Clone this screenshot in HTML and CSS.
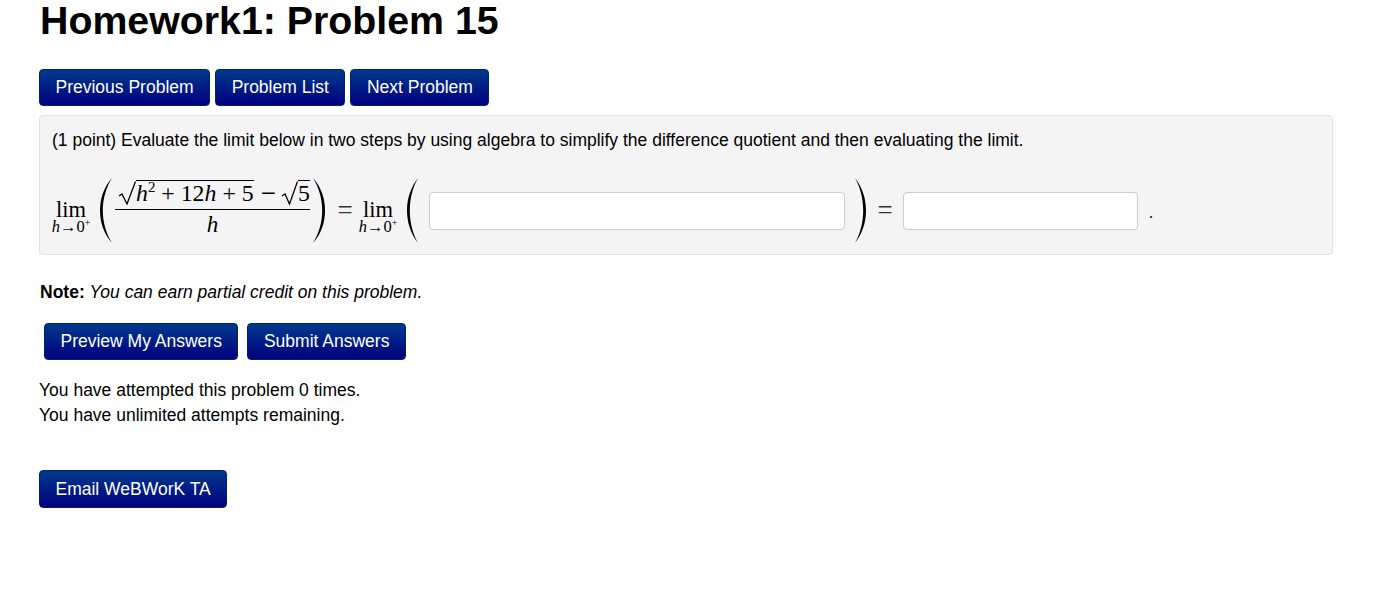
FILE: index.html
```html
<!DOCTYPE html>
<html lang="en">
<head>
  <meta charset="UTF-8" />
  <title>Homework1: Problem 15</title>
  <link rel="stylesheet" href="styles.css">
</head>
<body>
<div class="page">
  <h1 class="page-title">Homework1: Problem 15</h1>

  <div class="nav-buttons">
    <a class="btn">Previous Problem</a>
    <a class="btn">Problem List</a>
    <a class="btn">Next Problem</a>
  </div>

  <div class="problem-box">
    <p class="problem-text">(1 point) Evaluate the limit below in two steps by using algebra to simplify the difference quotient and then evaluating the limit.</p>

    <div class="math-row">
      <span class="lim">
        <span class="lim-word">lim</span>
        <span class="lim-sub"><i>h</i>→0<sup>+</sup></span>
      </span>

      <svg class="paren paren-first" width="12" height="65" viewBox="0 0 12 65"><path d="M12 0 C4 9 0 20 0 32.500 C0 45 4 56 12 65 C6.500 56 2.800 45 2.800 32.500 C2.800 20 6.500 9 12 0 Z"/></svg>

      <span class="frac">
        <span class="frac-top">
          <svg class="radical" width="18" height="25" viewBox="0 0 18 25"><path d="M1 15 L4 13 L9 23 L17.500 0.500" /></svg>
          <span class="radicand"><i>h</i><sup>2</sup> + 12<i>h</i> + 5</span>
          <span class="minus">−</span>
          <svg class="radical" width="17" height="25" viewBox="0 0 17 25"><path d="M1 15 L4 13 L8.500 23 L16.500 0.500" /></svg>
          <span class="radicand">5</span>
        </span>
        <span class="frac-bottom"><i>h</i></span>
      </span>

      <svg class="paren paren-second" width="12" height="65" viewBox="0 0 12 65"><path d="M0 0 C8 9 12 20 12 32.500 C12 45 8 56 0 65 C5.500 56 9.200 45 9.200 32.500 C9.200 20 5.500 9 0 0 Z"/></svg>

      <span class="equals eq-first">=</span>

      <span class="lim lim-second">
        <span class="lim-word">lim</span>
        <span class="lim-sub"><i>h</i>→0<sup>+</sup></span>
      </span>

      <svg class="paren paren-open" width="11" height="65" viewBox="0 0 11 65"><path d="M11 0 C4 9 0 20 0 32.500 C0 45 4 56 11 65 C6 56 2.800 45 2.800 32.500 C2.800 20 6 9 11 0 Z"/></svg>

      <input class="answer answer-long" type="text" />

      <svg class="paren paren-close" width="11" height="65" viewBox="0 0 11 65"><path d="M0 0 C7 9 11 20 11 32.500 C11 45 7 56 0 65 C5 56 8.200 45 8.200 32.500 C8.200 20 5 9 0 0 Z"/></svg>

      <span class="equals eq-second">=</span>

      <input class="answer answer-short" type="text" />

      <span class="period">.</span>
    </div>
  </div>

  <p class="note"><b>Note:</b> <i>You can earn partial credit on this problem.</i></p>

  <div class="submit-buttons">
    <a class="btn">Preview My Answers</a>
    <a class="btn">Submit Answers</a>
  </div>

  <p class="attempts">You have attempted this problem 0 times.<br>You have unlimited attempts remaining.</p>

  <a class="btn btn-email">Email WeBWorK TA</a>
</div>
</body>
</html>
```

FILE: styles.css
```css
* { box-sizing: border-box; margin: 0; padding: 0; }
body {
  font-family: 'Liberation Sans', Arial, sans-serif;
  background: #fff;
  color: #000;
  font-size: 17.5px;
  line-height: 25px;
}
.page {
  width: 1294px;
  margin-left: 39px;
}
.page-title {
  font-size: 39.3px;
  line-height: 40px;
  font-weight: bold;
  height: 69px;
  margin-left: 1px;
}

.nav-buttons {
  display: flex;
  gap: 5px;
  margin-bottom: 9px;
}
.btn {
  display: inline-block;
  height: 37px;
  padding: 0 15.5px;
  font-size: 17.5px;
  line-height: 35px;
  color: #fff;
  white-space: nowrap;
  background: linear-gradient(to bottom, #003a8c, #00007f);
  border: 1px solid #002266;
  border-radius: 4px;
  cursor: pointer;
}

.problem-box {
  height: 140px;
  padding: 12px;
  background: #f4f4f4;
  border: 1px solid #e3e3e3;
  border-radius: 4px;
}

.math-row {
  display: flex;
  align-items: center;
  height: 65px;
  margin-top: 25px;
  font-family: 'Liberation Serif', 'Times New Roman', serif;
  font-size: 23px;
  line-height: 1;
}
.lim {
  display: flex;
  flex-direction: column;
  align-items: center;
  flex: none;
  width: 38px;
  padding-top: 12px;
}
.lim-word {
  font-size: 22.5px;
  line-height: 20px;
}
.lim-sub {
  font-size: 16.5px;
  line-height: 13px;
  white-space: nowrap;
}
.lim-sub sup {
  font-size: 10px;
  line-height: 0;
}
.paren {
  flex: none;
  fill: #000;
}
.paren-first {
  margin-left: 10px;
}
.paren-second {
  margin-left: 3px;
}
.paren-open {
  margin-left: 10px;
}
.paren-close {
  margin-left: 10px;
}

.frac {
  display: flex;
  flex-direction: column;
  align-items: center;
  align-self: flex-start;
  flex: none;
  width: 195px;
  margin-left: 3px;
}
.frac-top {
  display: flex;
  align-items: flex-end;
  padding-left: 3px;
  width: 100%;
  height: 32px;
  border-bottom: 1.500px solid #000;
  padding-bottom: 4px;
  white-space: nowrap;
}
.frac-bottom {
  line-height: 30px;
}
.radical {
  flex: none;
  fill: none;
  stroke: #000;
  stroke-width: 1.300;
  margin-bottom: -1px;
}
.radicand {
  border-top: 1px solid #000;
  font-size: 23.8px;
  line-height: 25px;
  height: 25px;
}
.radicand sup {
  font-size: 15px;
  line-height: 0;
}
.minus {
  margin: 0 5px 0 7px;
  font-size: 27px;
  line-height: 24px;
}

.equals {
  flex: none;
  width: 16px;
  font-size: 27px;
  text-align: center;
  color: #333;
}
.eq-first {
  margin-left: 12px;
}
.lim-second {
  margin-left: 6px;
}
.eq-second {
  margin-left: 11px;
}

.answer {
  flex: none;
  height: 38px;
  margin-top: 1px;
  background: #fff;
  border: 1px solid #ccc;
  border-radius: 4px;
}
.answer-long {
  width: 416px;
  margin-left: 11px;
}
.answer-short {
  width: 235px;
  margin-left: 10px;
}
.period {
  margin-left: 11px;
  font-size: 16px;
  padding-top: 4px;
}

.note {
  margin-top: 25px;
  margin-left: 1px;
}

.submit-buttons {
  display: flex;
  gap: 9px;
  margin-top: 18px;
  margin-left: 5px;
}

.attempts {
  margin-top: 18px;
}

.btn-email {
  height: 38px;
  line-height: 36px;
  margin-top: 42px;
}
```
